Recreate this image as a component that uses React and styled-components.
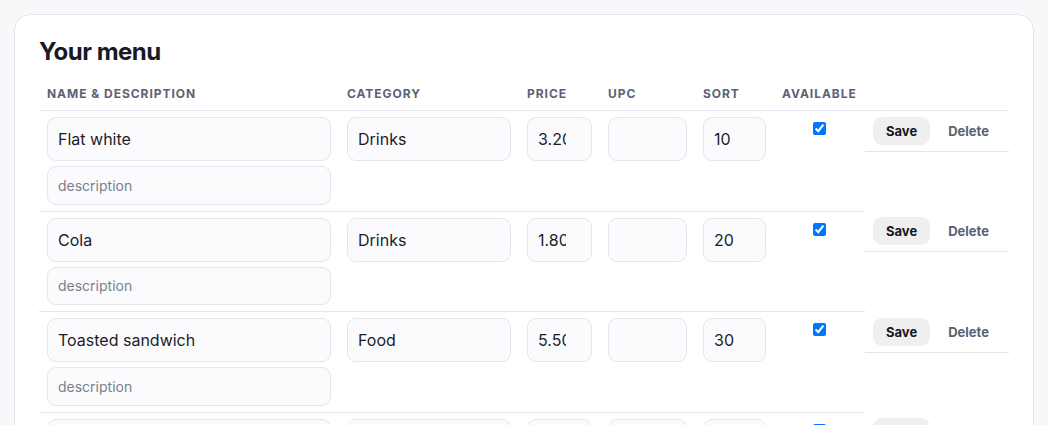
import React from 'react';
import styled, { createGlobalStyle } from 'styled-components';

const items = [
    { name: 'Flat white', category: 'Drinks', price: '3.20', sort: '10' },
    { name: 'Cola', category: 'Drinks', price: '1.80', sort: '20' },
    { name: 'Toasted sandwich', category: 'Food', price: '5.50', sort: '30' },
    { name: 'Banana bread', category: 'Food', price: '3.00', sort: '40' },
];

const columns = [
    { label: 'Name & description', width: 300 },
    { label: 'Category', width: 180 },
    { label: 'Price', width: 81 },
    { label: 'UPC', width: 95 },
    { label: 'Sort', width: 79 },
    { label: 'Available', width: 91 },
    { label: '', width: 144 },
];

const App = () => {
    return (
        <>
            <GlobalStyle />
            <Page>
                <Card>
                    <Title>Your menu</Title>
                    <Table>
                        <colgroup>
                            {columns.map((c, i) => <col key={i} style={{ width: c.width }} />)}
                        </colgroup>
                        <thead>
                            <tr>
                                {columns.map((c, i) => <Th key={i}>{c.label}</Th>)}
                            </tr>
                        </thead>
                        <tbody>
                            {items.map((item, i) => (
                                <tr key={i}>
                                    <Td>
                                        <NameStack>
                                            <Field defaultValue={item.name} />
                                            <Field small placeholder='description' />
                                        </NameStack>
                                    </Td>
                                    <Td><Field defaultValue={item.category} /></Td>
                                    <Td><Field type='number' step='0.01' defaultValue={item.price} /></Td>
                                    <Td><Field /></Td>
                                    <Td><Field type='number' defaultValue={item.sort} /></Td>
                                    <Td><Check type='checkbox' defaultChecked /></Td>
                                    <Actions>
                                        <SaveButton>Save</SaveButton>
                                        <DeleteButton>Delete</DeleteButton>
                                    </Actions>
                                </tr>
                            ))}
                        </tbody>
                    </Table>
                </Card>
            </Page>
        </>
    )
}

const GlobalStyle = createGlobalStyle`
    body {
        margin: 0;
        background: #f8f8fb;
        font-family: Inter, 'Noto Sans', sans-serif;
        color: #1b1d2a;
    }
`

const Page = styled.div`
    padding: 14px;
`

const Card = styled.div`
    background: #fff;
    border: 1px solid #e4e6ee;
    border-radius: 16px;
    padding: 22px 24px 24px;
`

const Title = styled.h2`
    margin: 0 0 12px;
    font-size: 24px;
    font-weight: 700;
    letter-spacing: -0.02em;
    color: #181a26;
`

const Table = styled.table`
    width: 100%;
    border-collapse: collapse;
    table-layout: fixed;
`

const Th = styled.th`
    text-align: left;
    padding: 8px 8px 9px;
    font-size: 12px;
    font-weight: 700;
    letter-spacing: 0.08em;
    text-transform: uppercase;
    color: #5b6275;
    border-bottom: 1px solid #e4e6ee;
    white-space: nowrap;
`

const Td = styled.td`
    padding: 6px 8px;
    vertical-align: top;
    border-bottom: 1px solid #e4e6ee;
`

const NameStack = styled.div`
    display: flex;
    flex-direction: column;
    gap: 5px;
`

const Field = styled.input`
    box-sizing: border-box;
    width: 100%;
    height: ${p => p.small ? '38.5px' : '44px'};
    padding: 0 10px;
    border: 1px solid #e4e6ee;
    border-radius: 9px;
    background: #fbfbfe;
    font-family: inherit;
    font-size: ${p => p.small ? '14px' : '16px'};
    color: #1b1d2a;
    outline: none;

    &::placeholder {
        color: #7b7f8c;
    }
`

const Check = styled.input`
    display: block;
    width: 13px;
    height: 13px;
    margin: 5px auto 0;
`

const Actions = styled.td`
    display: flex;
    align-items: center;
    gap: 8px;
    padding: 6px 8px;
    border-bottom: 1px solid #e4e6ee;
`

const SaveButton = styled.button`
    height: 28px;
    padding: 0 13px;
    border: none;
    border-radius: 9px;
    background: #efefef;
    font-family: inherit;
    font-size: 13px;
    font-weight: 700;
    color: #16171f;
`

const DeleteButton = styled.button`
    height: 28px;
    padding: 0 10px;
    border: none;
    background: transparent;
    font-family: inherit;
    font-size: 13px;
    font-weight: 700;
    color: #5b6275;
`

export default App;
